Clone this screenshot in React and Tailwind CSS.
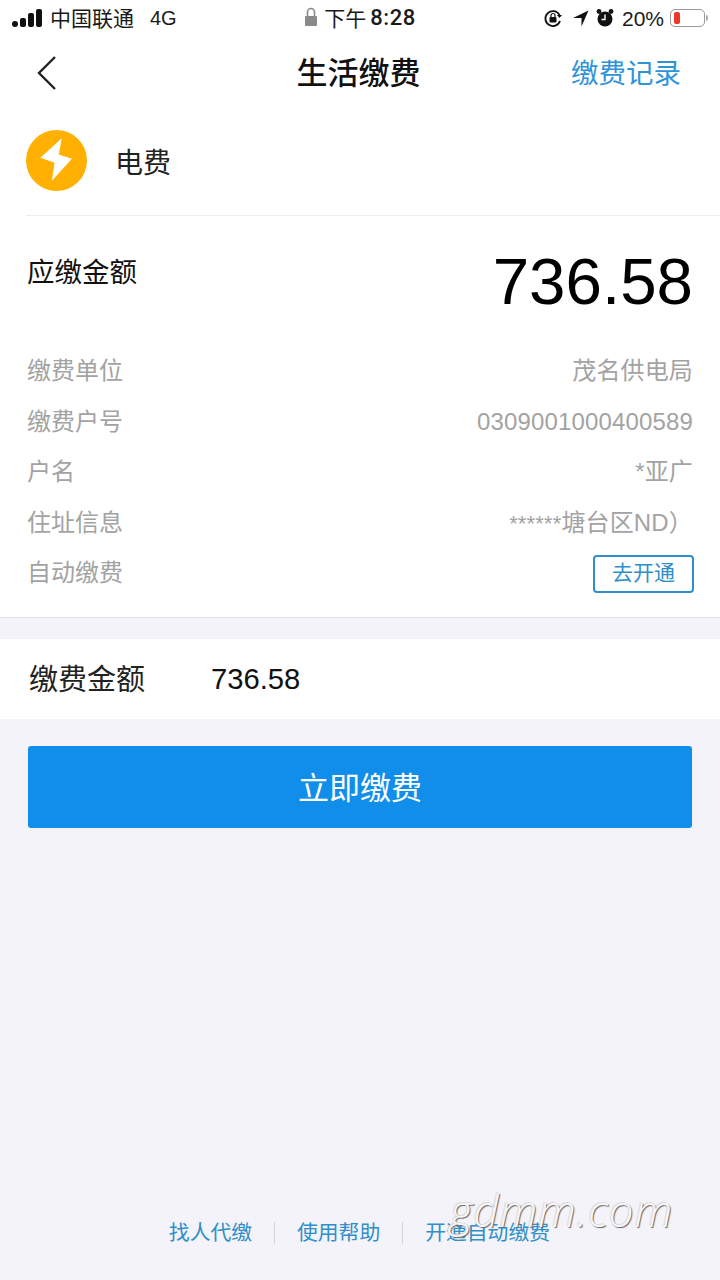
import React from 'react';

const font = { fontFamily: '"Liberation Sans", "Noto Sans CJK SC", sans-serif' };

const rows = [
    { label: '缴费单位', value: '茂名供电局' },
    { label: '缴费户号', value: '0309001000400589' },
    { label: '户名', value: '*亚广' },
    { label: '住址信息', value: <><span className="text-[22px]">******</span>塘台区ND）</> },
];

const StatusBar = () => (
    <div className="flex h-[36px] items-center justify-between text-[21px] leading-none text-[#1a1a1a]">
        <div className="flex w-[260px] items-center pl-[12px]">
            <div className="flex items-end gap-[2px]">
                <span className="h-[6px] w-[6px] rounded-[3px] bg-[#111]" />
                <span className="h-[9px] w-[6px] rounded-[2px] bg-[#111]" />
                <span className="h-[14px] w-[6px] rounded-[2px] bg-[#111]" />
                <span className="h-[18px] w-[6px] rounded-[2px] bg-[#111]" />
            </div>
            <span className="ml-[8px]">中国联通</span>
            <span className="ml-[16px] text-[20px]">4G</span>
        </div>
        <div className="flex items-center">
            <svg className="mb-[3px]" width="14" height="20" viewBox="0 0 14 20">
                <path d="M3.5 9V5a3.5 3.5 0 0 1 7 0v4" fill="none" stroke="#8a8a8a" strokeWidth="1.6" />
                <rect x="1" y="9" width="12" height="10" rx="1" fill="#8a8a8a" />
            </svg>
            <span className="ml-[6px]">下午</span>
            <span className="ml-[4px] text-[22px] font-medium tracking-[0.6px]" style={{ fontFamily: 'Roboto, sans-serif' }}>8:28</span>
        </div>
        <div className="flex w-[260px] items-center justify-end pr-[15px]">
            <svg width="20" height="20" viewBox="0 0 20 20">
                <path d="M16.5 7A7.5 7.5 0 1 0 17 13" fill="none" stroke="#111" strokeWidth="1.8" />
                <path d="M14 7h5l-2.5 3z" fill="#111" />
                <rect x="6.5" y="9" width="7" height="5.5" rx="1" fill="#111" />
                <path d="M8 9V7.5a2 2 0 0 1 4 0V9" fill="none" stroke="#111" strokeWidth="1.2" />
            </svg>
            <svg className="ml-[9px]" width="17" height="17" viewBox="0 0 17 17">
                <path d="M16.5 0.5L9.5 16.5V8H1z" fill="#111" />
            </svg>
            <svg className="ml-[7px]" width="18" height="20" viewBox="0 0 18 20">
                <circle cx="9" cy="11" r="7.5" fill="#111" />
                <path d="M9 6.5V11.5H5.5" fill="none" stroke="#fff" strokeWidth="1.4" />
                <circle cx="3" cy="3.5" r="2.4" fill="#111" />
                <circle cx="15" cy="3.5" r="2.4" fill="#111" />
            </svg>
            <span className="ml-[8px]">20%</span>
            <div className="relative ml-[6px] h-[18px] w-[35px] rounded-[5px] border border-[#999] p-[2px]">
                <div className="ml-[1px] h-full w-[6px] rounded-[2px] bg-[#f0352b]" />
                <span className="absolute right-[-4px] top-[5px] h-[6px] w-[2px] rounded-r-[2px] bg-[#aaa]" />
            </div>
        </div>
    </div>
);

const App = () => {
    return (
        <div className="relative flex h-[1280px] w-[720px] flex-col overflow-hidden bg-[#f3f3f9]" style={font}>
            <div className="border-b border-[#e2e2e6] bg-white">
                <StatusBar />

                {/* nav */}
                <div className="flex h-[74px] items-center pl-[36px] pr-[39px]">
                    <div className="flex-1">
                        <svg width="22" height="36" viewBox="0 0 22 36">
                            <path d="M19 2L3 18l16 16" fill="none" stroke="#222" strokeWidth="2.4" />
                        </svg>
                    </div>
                    <span className="text-[31px] font-medium leading-none text-[#111]">生活缴费</span>
                    <div className="mt-[2px] flex-1 text-right text-[27.5px] leading-none text-[#2f93d8]">缴费记录</div>
                </div>

                {/* bill type */}
                <div className="ml-[26px] flex h-[106px] items-center border-b border-[#ececf0] pb-[5px]">
                    <svg width="61" height="61" viewBox="0 0 62 62">
                        <circle cx="31" cy="31" r="31" fill="#ffb000" />
                        <path d="M36.3 8.3L14.7 28.3 29 33.3 26.3 51.7 46.7 29.3 33.3 25z" fill="#fff" />
                    </svg>
                    <span className="ml-[28px] mt-[7px] text-[28px] leading-none text-[#222]">电费</span>
                </div>

                {/* amount */}
                <div className="flex h-[130px] items-start justify-between pl-[27px] pr-[27px]">
                    <span className="mt-[43px] text-[27.5px] leading-none text-[#111]">应缴金额</span>
                    <span className="mt-[33px] text-[65.5px] leading-none text-black">736.58</span>
                </div>

                {/* details */}
                <div className="flex flex-col px-[27px] pb-[18px] text-[24px] leading-none text-[#a3a3a3]">
                    {rows.map((row) => (
                        <div key={row.label} className="flex h-[50.5px] items-center justify-between">
                            <span>{row.label}</span>
                            <span className="tracking-[0.15px]">{row.value}</span>
                        </div>
                    ))}
                    <div className="flex h-[50.5px] items-center justify-between">
                        <span>自动缴费</span>
                        <button className="mr-[-1px] mt-[2px] flex h-[38px] w-[101px] items-center justify-center rounded-[4px] border-2 border-[#2f8fc9] pb-[3px] text-[21px] leading-none text-[#2f8fc9]">
                            去开通
                        </button>
                    </div>
                </div>
            </div>

            {/* pay amount */}
            <div className="mt-[21px] flex h-[80px] items-center bg-white pl-[29px]">
                <span className="mt-[4px] w-[182px] text-[29px] leading-none text-[#222]">缴费金额</span>
                <span className="mt-[2px] text-[29.2px] leading-none text-[#111]">736.58</span>
            </div>

            <div className="px-[28px] pt-[27px]">
                <button className="flex h-[82px] w-full items-center justify-center rounded-[3px] bg-[#108ee9] pt-[4px] text-[31px] leading-none text-white">
                    立即缴费
                </button>
            </div>

            {/* footer links */}
            <div className="mt-auto flex items-center justify-end pb-[36px] pr-[170px] text-[20.8px] leading-none text-[#2f8fc9]">
                <span>找人代缴</span>
                <span className="mx-[22px] h-[22px] w-px bg-[#d4d4da]" />
                <span>使用帮助</span>
                <span className="mx-[22px] h-[22px] w-px bg-[#d4d4da]" />
                <span>开通自动缴费</span>
            </div>

            {/* watermark */}
            <span
                className="absolute left-[450px] top-[1188px] text-[44px] italic leading-none tracking-[1px] text-[#f7f7fa] [text-shadow:1px_1px_1px_#666,-1px_-1px_0_#ddd]"
                style={{ fontFamily: '"Open Sans", sans-serif', fontWeight: 300 }}
            >
                gdmm.com
            </span>
        </div>
    );
};

export default App;
